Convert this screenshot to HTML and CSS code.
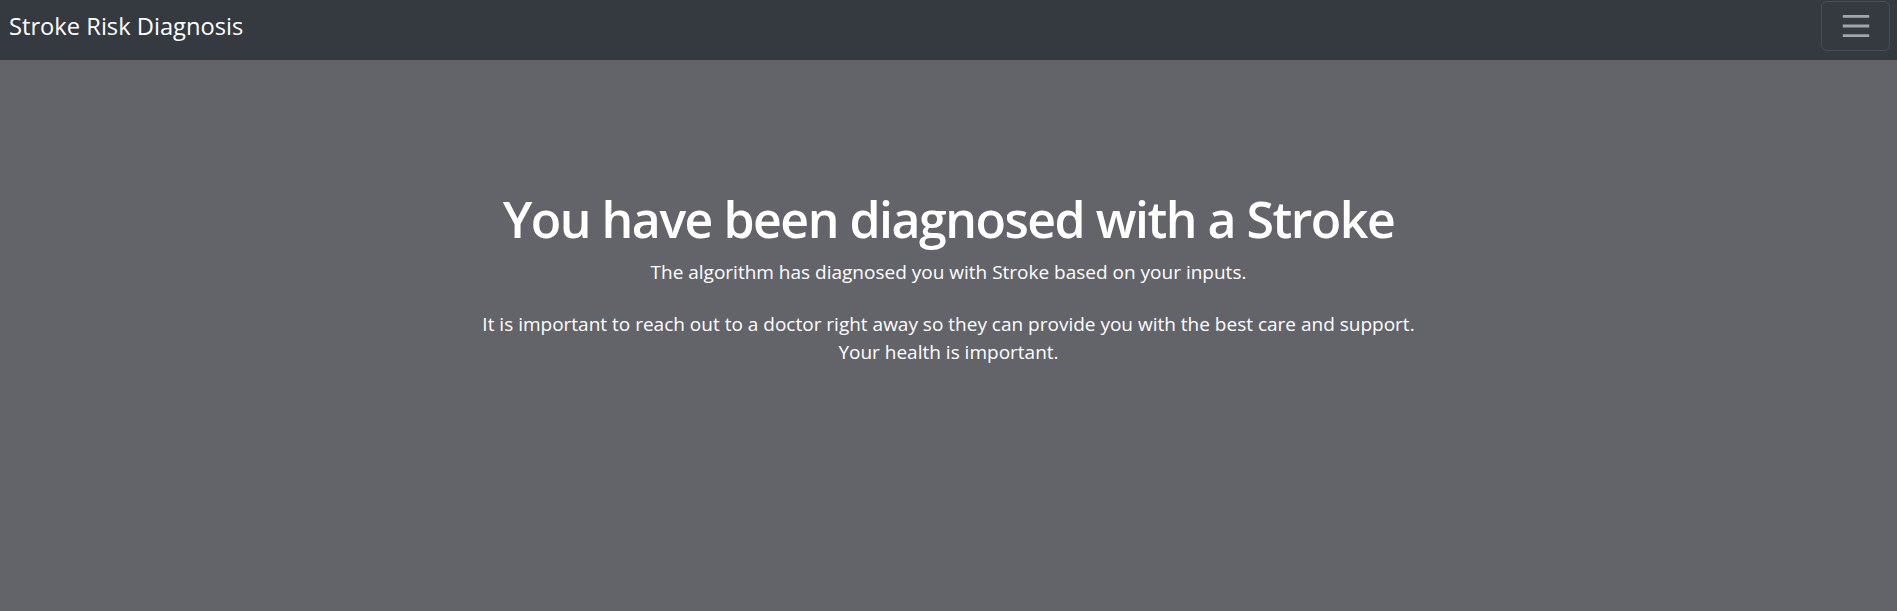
FILE: index.html
```html
<!DOCTYPE html>
<html lang="en">
<head>
<meta charset="utf-8">
<title>Stroke Risk Diagnosis</title>
<link rel="stylesheet" href="styles.css">
</head>
<body>
<nav class="navbar">
  <a class="brand" href="#">Stroke Risk Diagnosis</a>
  <button class="toggler" type="button" aria-label="Toggle navigation">
    <svg class="toggler-icon" viewBox="0 0 30 30" width="36" height="36" aria-hidden="true">
      <path d="M4 7h22M4 15h22M4 23h22" stroke="rgba(255,255,255,0.55)" stroke-width="2.4" stroke-linecap="butt" fill="none"/>
    </svg>
  </button>
</nav>
<main class="content">
  <h1 class="title">You have been diagnosed with a Stroke</h1>
  <p class="lead">The algorithm has diagnosed you with Stroke based on your inputs.</p>
  <p class="note">It is important to reach out to a doctor right away so they can provide you with the best care and support.<br>Your health is important.</p>
</main>
</body>
</html>
```

FILE: styles.css
```css
* { box-sizing: border-box; }
html, body { height: 100%; }
body {
  margin: 0;
  background: #636469;
  color: #fff;
  font-family: "Open Sans", "Noto Sans", sans-serif;
  font-size: 19px;
  line-height: 1.5;
}
.navbar {
  height: 60px;
  background: #343a40;
  display: flex;
  align-items: flex-start;
  justify-content: space-between;
  padding: 15px 7px 0 9px;
}
.brand {
  color: #fff;
  text-decoration: none;
  font-size: 23.7px;
  line-height: 1;
}
.toggler {
  width: 69px;
  height: 50px;
  margin-top: -14px;
  background: transparent;
  border: 1px solid rgba(255,255,255,0.1);
  border-radius: 6px;
  display: flex;
  align-items: center;
  justify-content: center;
  padding: 0;
}
.content {
  display: flex;
  flex-direction: column;
  align-items: center;
  text-align: center;
  padding-top: 129px;
}
.title {
  margin: 0 0 9px;
  font-size: 50px;
  font-weight: 600;
  letter-spacing: -1.5px;
  line-height: 1.2;
}
.lead {
  margin: 0 0 23px;
}
.note {
  margin: 0;
}
```
